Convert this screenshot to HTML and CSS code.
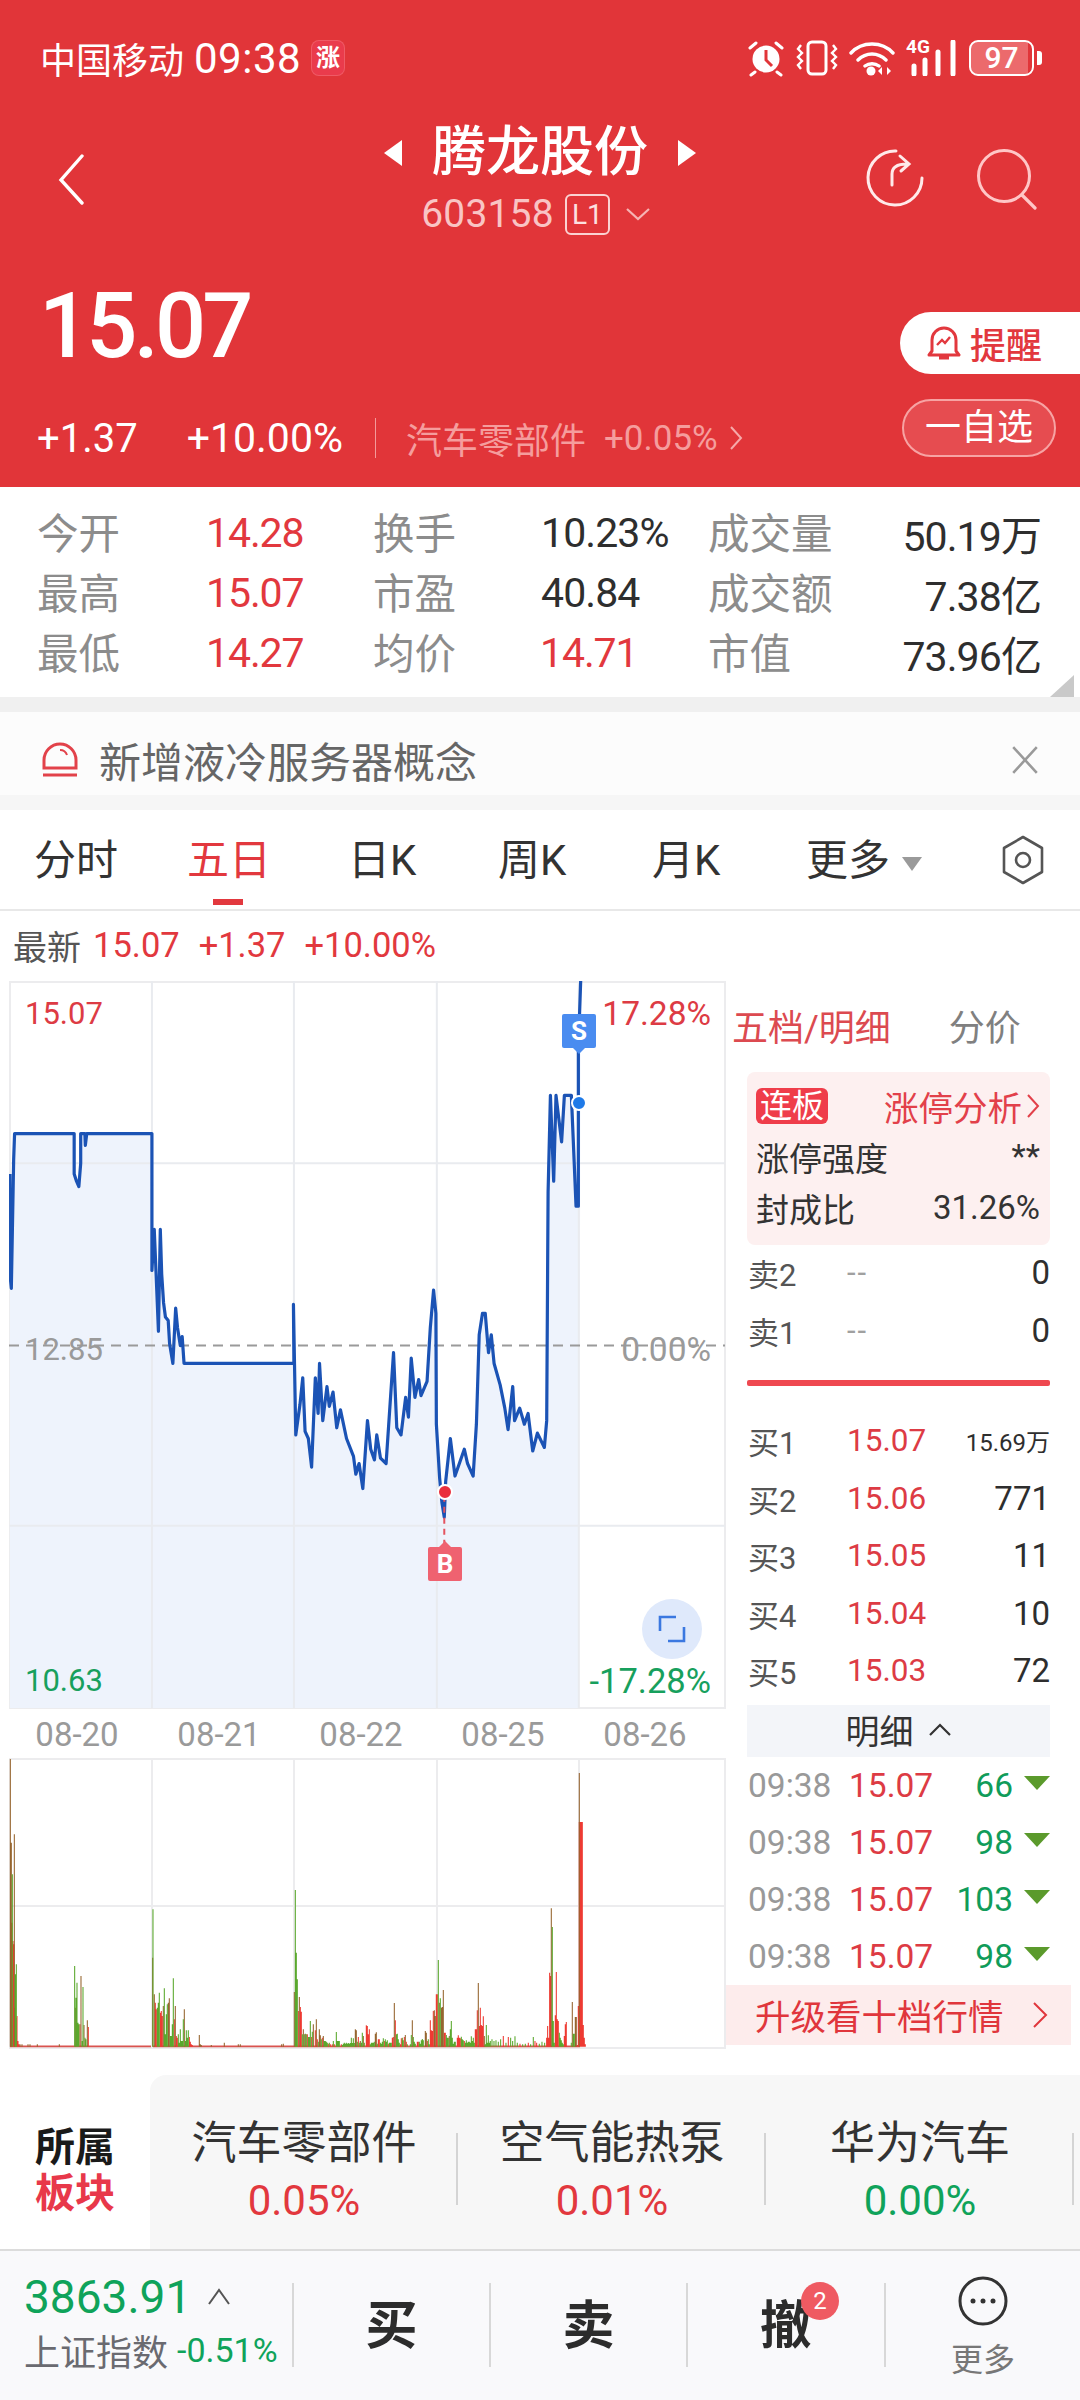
FILE: index.html
```html
<!DOCTYPE html>
<html lang="zh">
<head>
<meta charset="utf-8">
<title>腾龙股份</title>
<link rel="stylesheet" href="styles.css">
</head>
<body>
<div class="page">
  <header class="header">
    <div class="status">
      <span class="carrier">中国移动</span>
      <span class="clock">09:38</span>
      <span class="appicon">涨</span>
      <span class="status-right">
        <svg class="si" width="38" height="38" viewBox="0 0 38 38"><circle cx="19" cy="20" r="13.5" fill="#fff"/><path d="M19 11v10l6 6" fill="none" stroke="#e13539" stroke-width="3"/><path d="M3 9l6-5M35 9l-6-5M8 33l-4 3M30 33l4 3" stroke="#fff" stroke-width="3" stroke-linecap="round"/></svg>
        <svg class="si" width="42" height="36" viewBox="0 0 42 36"><rect x="12" y="2" width="18" height="32" rx="4" fill="none" stroke="#fff" stroke-width="3"/><path d="M5 5l-3 4 4 4-4 4 4 4-4 4 3 4M37 5l3 4-4 4 4 4-4 4 4 4-3 4" fill="none" stroke="#fff" stroke-width="2.4"/></svg>
        <svg class="si" width="46" height="36" viewBox="0 0 46 36"><path d="M2 13C13 1 33 1 44 13M9 20c8-8 20-8 28 0M16 26c4-3 10-3 14 0" fill="none" stroke="#fff" stroke-width="3.4" stroke-linecap="round"/><circle cx="22" cy="31" r="4.5" fill="#fff"/><path d="M33 27l-4 4 4 4zM38 27l4 4-4 4z" fill="#fff"/></svg>
        <span class="net"><b class="net-4g">4G</b><svg class="net-bars" width="50" height="36" viewBox="0 0 50 36"><path d="M6 26v8M17 20v14M30 12v22M45 2v32" stroke="#fff" stroke-width="5" stroke-linecap="round"/></svg></span>
        <span class="battery"><span class="battery-num">97</span></span>
        <span class="battery-nub"></span>
      </span>
    </div>
    <div class="nav">
      <div class="nav-left">
        <svg width="30" height="52" viewBox="0 0 30 52"><path d="M26 3L5 27l21 23" fill="none" stroke="#fff" stroke-width="3.4" stroke-linecap="round"/></svg>
      </div>
      <div class="nav-center">
        <div class="title-row">
          <i class="tri tri-l"></i>
          <span class="title">腾龙股份</span>
          <i class="tri tri-r"></i>
        </div>
        <div class="code-row">
          <span class="code">603158</span>
          <span class="l1">L1</span>
          <svg class="code-chev" width="26" height="14" viewBox="0 0 26 14"><path d="M2 2l11 10L24 2" fill="none" stroke="#f6b4b4" stroke-width="2.2"/></svg>
        </div>
      </div>
      <div class="nav-right">
        <svg width="60" height="60" viewBox="0 0 60 60"><path d="M31 3A27 27 0 1 0 57 30" fill="none" stroke="#ffeaea" stroke-width="3" stroke-linecap="round"/><path d="M27 37V26c0-7 5-10 15-10M35 8l9 8-8 7" fill="none" stroke="#ffeaea" stroke-width="3" stroke-linecap="round"/></svg>
        <svg width="64" height="62" viewBox="0 0 64 62"><circle cx="29" cy="28" r="25.5" fill="none" stroke="#ffc6c6" stroke-width="3"/><path d="M47 47l13 13" stroke="#ffc6c6" stroke-width="3.2" stroke-linecap="round"/></svg>
      </div>
    </div>
    <div class="quote">
      <div class="quote-left">
        <div class="price">15.07</div>
        <div class="delta-row">
          <span class="delta">+1.37</span>
          <span class="delta delta-pct">+10.00%</span>
          <i class="delta-sep"></i>
          <span class="sector">汽车零部件</span>
          <span class="sector-pct">+0.05%</span>
          <svg width="14" height="26" viewBox="0 0 14 26"><path d="M2 2l10 11L2 24" fill="none" stroke="#f6a9a9" stroke-width="2"/></svg>
        </div>
      </div>
      <div class="quote-right">
        <div class="pill-alert">
          <svg width="34" height="38" viewBox="0 0 34 38"><path d="M5 27V16a12 12 0 0 1 24 0v11l3 4H2zM12 34h10" fill="none" stroke="#e2383e" stroke-width="3" stroke-linejoin="round"/><path d="M10 21l5-5 3 3 5-6" fill="none" stroke="#e2383e" stroke-width="2.4"/></svg>
          <span>提醒</span>
        </div>
        <div class="pill-watch">一自选</div>
      </div>
    </div>
  </header>

  <section class="stats">
    <span class="lb">今开</span><span class="up">14.28</span><span class="lb">换手</span><span class="val">10.23%</span><span class="lb">成交量</span><span class="val ra">50.19万</span>
    <span class="lb">最高</span><span class="up">15.07</span><span class="lb">市盈</span><span class="val">40.84</span><span class="lb">成交额</span><span class="val ra">7.38亿</span>
    <span class="lb">最低</span><span class="up">14.27</span><span class="lb">均价</span><span class="up">14.71</span><span class="lb">市值</span><span class="val ra">73.96亿</span>
    <i class="stats-corner"></i>
  </section>
  <div class="band"></div>
  <section class="notice">
    <svg width="38" height="38" viewBox="0 0 38 38"><path d="M3 27V19a16 16 0 0 1 32 0v8zM2 34h34" fill="none" stroke="#e2424a" stroke-width="3"/><path d="M19 9c3 0 6 2 7 5" fill="none" stroke="#e2424a" stroke-width="2"/></svg>
    <span class="notice-text">新增液冷服务器概念</span>
    <svg class="notice-x" width="30" height="30" viewBox="0 0 28 28"><path d="M3 2l22 24M25 2L3 26" stroke="#9a9a9a" stroke-width="2.4"/></svg>
  </section>
  <div class="band-thin"></div>

  <nav class="tabs">
    <span class="tab tab-a">分时</span>
    <span class="tab tab-b tab-on">五日</span>
    <span class="tab tab-c">日K</span>
    <span class="tab tab-d">周K</span>
    <span class="tab tab-e">月K</span>
    <span class="tab tab-f">更多<i class="tab-tri"></i></span>
    <svg class="tab-set" width="44" height="50" viewBox="0 0 44 50"><path d="M22 2l19 11v24L22 48 3 37V13z" fill="none" stroke="#555" stroke-width="2.6" stroke-linejoin="round"/><circle cx="22" cy="25" r="7" fill="none" stroke="#555" stroke-width="2.6"/></svg>
  </nav>
  <div class="latest"><span class="latest-l">最新</span><span>15.07</span><span>+1.37</span><span>+10.00%</span></div>

  <section class="main">
    <div class="charts">
      <div class="chart">
        <svg class="chart-svg" width="716" height="727" viewBox="20 60 1538 2034" preserveAspectRatio="none">
          <path class="area" d="M22 600L22 880 25 920 30 560 32 487 160 487 160 600 165 620 170 635 174 570 174 487 183 487 184 520 187 487 327 487 327 870 332 755 336 880 341 1040 345 755 348 880 352 960 356 1000 362 1010 365 1075 372 1130 378 975 382 1030 388 1080 392 1055 396 1130 400 1130 632 1130 631 965 636 1330 645 1245 651 1170 656 1320 663 1340 670 1420 678 1170 684 1270 687 1130 694 1290 703 1195 708 1250 716 1210 724 1310 732 1260 745 1340 760 1390 765 1440 772 1410 780 1480 790 1290 797 1370 805 1400 810 1330 818 1395 830 1410 846 1100 853 1310 862 1330 872 1225 878 1280 884 1115 892 1225 900 1175 905 1220 918 1180 925 1030 932 925 937 990 938 1300 945 1450 950 1520 955 1560 958 1460 968 1340 978 1445 990 1400 998 1370 1005 1410 1017 1445 1024 1300 1030 1050 1037 990 1043 990 1050 1100 1056 1050 1062 1130 1075 1190 1085 1255 1092 1315 1102 1195 1106 1290 1117 1255 1127 1300 1135 1270 1145 1375 1155 1325 1170 1365 1175 1290 1178 650 1183 380 1190 620 1195 380 1207 510 1213 380 1228 380 1238 690 1243 690 1243 250 1248 60L1244 2094 22 2094Z"/>
          <path class="grid" d="M327 60V2094M632 60V2094M939 60V2094M1244 60V2094M20 570H1558M20 1584H1558"/>
          <path class="zero" d="M20 1080H1558"/>
          <path class="pline" d="M22 600L22 880 25 920 30 560 32 487 160 487 160 600 165 620 170 635 174 570 174 487 183 487 184 520 187 487 327 487 327 870 332 755 336 880 341 1040 345 755 348 880 352 960 356 1000 362 1010 365 1075 372 1130 378 975 382 1030 388 1080 392 1055 396 1130 400 1130 632 1130 631 965 636 1330 645 1245 651 1170 656 1320 663 1340 670 1420 678 1170 684 1270 687 1130 694 1290 703 1195 708 1250 716 1210 724 1310 732 1260 745 1340 760 1390 765 1440 772 1410 780 1480 790 1290 797 1370 805 1400 810 1330 818 1395 830 1410 846 1100 853 1310 862 1330 872 1225 878 1280 884 1115 892 1225 900 1175 905 1220 918 1180 925 1030 932 925 937 990 938 1300 945 1450 950 1520 955 1560 958 1460 968 1340 978 1445 990 1400 998 1370 1005 1410 1017 1445 1024 1300 1030 1050 1037 990 1043 990 1050 1100 1056 1050 1062 1130 1075 1190 1085 1255 1092 1315 1102 1195 1106 1290 1117 1255 1127 1300 1135 1270 1145 1375 1155 1325 1170 1365 1175 1290 1178 650 1183 380 1190 620 1195 380 1207 510 1213 380 1228 380 1238 690 1243 690 1243 250 1248 60"/>
          <path class="bdash" d="M955 1500V1650"/>
        </svg>
        <span class="cl cl-tl">15.07</span>
        <span class="cl cl-tr">17.28%</span>
        <span class="cl cl-ml">12.85</span>
        <span class="cl cl-mr">0.00%</span>
        <span class="cl cl-bl">10.63</span>
        <span class="cl cl-br">-17.28%</span>
        <i class="dot dot-red"></i>
        <i class="dot dot-blue"></i>
        <span class="mark mark-s">S</span>
        <span class="mark mark-b">B</span>
        <span class="expand">
          <svg width="30" height="30" viewBox="0 0 30 30"><path d="M3 17V3h16M27 13v14H11" fill="none" stroke="#3b78e0" stroke-width="2.6"/></svg>
        </span>
      </div>
      <div class="dates"><span>08-20</span><span>08-21</span><span>08-22</span><span>08-25</span><span>08-26</span></div>
      <div class="volume">
        <svg width="717" height="291" viewBox="9 1757 717 291">
          <path class="vgrid" d="M10 1758H725V2047H10ZM152 1757V2046M294 1757V2046M437 1757V2046M579 1757V2046M9 1905H725"/>
          <g transform="translate(0 1890) scale(.3333)">
            <path class="vbase" d="M30 466H453M459 466H880M880 466H1740"/>
            <path class="vr" d="M33 467V95M36 467V95M39 467V150M42 467V160M45 467V350M48 467V380M51 467V375M54 467V450M57 467V460M240 467V400M265 467V408M466 467V335M469 467V355M481 467V365M484 467V360M487 467V375M523 467V385M529 467V435M532 467V440M568 467V438M571 467V452M574 467V460M577 467V462"/>
            <path class="vo" d="M31 467V-396M34 467V-145M43 467V-170M60 467V460M66 467V460M84 467V460M90 467V460M112 467V460M178 467V460M226 467V350M243 467V255M252 467V402M262 467V388M458 467V200M463 467V310M490 467V345M505 467V335M508 467V322M526 467V345M553 467V355M598 467V432M601 467V460M604 467V462M634 467V462M673 467V455M715 467V460M721 467V460M845 467V460M850 467V458"/>
            <path class="vg" d="M37 467V-50M46 467V250M49 467V220M224 467V225M228 467V320M231 467V275M234 467V395M237 467V400M246 467V450M249 467V288M255 467V440M258 467V445M459 467V55M472 467V350M475 467V335M478 467V305M493 467V292M496 467V430M499 467V370M502 467V340M511 467V435M514 467V435M517 467V400M520 467V262M535 467V430M538 467V455M541 467V415M544 467V450M547 467V450M550 467V385M556 467V450M559 467V418M562 467V440M565 467V418"/>
          </g>
          <g transform="translate(290 1890) scale(.3333)">
            <path class="vr" d="M25 467V360M31 467V348M34 467V362M52 467V430M64 467V438M76 467V418M82 467V445M97 467V440M115 467V458M121 467V460M127 467V460M133 467V460M154 467V460M205 467V438M229 467V403M232 467V405M235 467V430M238 467V415M265 467V445M268 467V445M283 467V450M295 467V458M307 467V440M310 467V438M316 467V388M331 467V460M334 467V442M343 467V438M349 467V452M382 467V452M385 467V452M412 467V450M421 467V388M424 467V418M427 467V420M430 467V360M439 467V310M442 467V310M463 467V425M466 467V425M502 467V440M505 467V433M508 467V440M511 467V442M523 467V450M556 467V415M559 467V415M562 467V358M568 467V405M571 467V350M574 467V402M577 467V405M580 467V376M640 467V435M655 467V438M690 467V458M715 467V455M735 467V450M740 467V455M770 467V440M773 467V405M776 467V440M779 467V245M782 467V255M796 467V373M799 467V243M802 467V385M805 467V390M823 467V435M826 467V400M829 467V393M862 467V462M865 467V345M868 467V-207M871 467V-207M874 467V-207M877 467V-207M880 467V402M883 467V440M886 467V460"/>
            <path class="vo" d="M13 467V303M28 467V318M40 467V415M46 467V428M70 467V400M79 467V385M88 467V415M91 467V433M100 467V435M196 467V415M199 467V418M211 467V450M220 467V435M256 467V428M259 467V424M313 467V336M346 467V432M367 467V388M406 467V420M409 467V425M433 467V358M436 467V375M448 467V335M454 467V350M457 467V348M460 467V297M478 467V435M565 467V276M583 467V435M784 467 784 52M847 467V333M856 467V378M859 467V378M868 467V-354"/>
            <path class="vg" d="M16 467V-3M19 467V185M22 467V265M37 467V430M43 467V430M49 467V430M55 467V438M58 467V438M61 467V390M67 467V422M85 467V452M94 467V445M103 467V450M106 467V450M109 467V452M112 467V455M118 467V455M130 467V450M139 467V423M142 467V450M145 467V450M148 467V450M157 467V462M160 467V458M163 467V455M166 467V458M169 467V455M172 467V458M175 467V456M178 467V458M181 467V456M184 467V440M187 467V456M190 467V442M193 467V456M202 467V452M208 467V455M214 467V455M217 467V425M223 467V455M241 467V460M244 467V455M247 467V455M250 467V455M253 467V452M262 467V458M271 467V455M274 467V458M277 467V452M280 467V442M286 467V445M289 467V452M292 467V448M298 467V455M301 467V455M304 467V455M319 467V430M322 467V428M325 467V445M328 467V455M337 467V440M340 467V448M352 467V460M361 467V460M364 467V432M370 467V438M373 467V452M376 467V458M388 467V452M391 467V458M394 467V448M397 467V444M400 467V448M415 467V445M418 467V460M445 467V207M451 467V322M469 467V432M472 467V440M475 467V440M481 467V415M484 467V390M487 467V440M490 467V458M493 467V452M496 467V452M514 467V437M517 467V445M520 467V448M526 467V455M529 467V448M532 467V455M535 467V452M538 467V452M541 467V455M544 467V436M547 467V450M550 467V440M553 467V455M586 467V460M589 467V402M592 467V455M595 467V433M598 467V455M601 467V450M606 467V445M612 467V450M618 467V448M625 467V452M632 467V445M648 467V455M662 467V440M668 467V450M675 467V436M682 467V455M698 467V460M706 467V458M722 467V460M730 467V438M748 467V458M756 467V452M764 467V455M787 467V108M790 467V390M793 467V455M808 467V425M811 467V440M814 467V448M817 467V455M820 467V460M844 467V455M850 467V428M853 467V428"/>
          </g>
        </svg>
      </div>
    </div>

    <aside class="panel">
      <div class="ptabs"><span class="ptab-on">五档/明细</span><span class="ptab">分价</span></div>
      <div class="limit">
        <div class="limit-row limit-head"><span class="limit-tag">连板</span><span class="limit-link">涨停分析<svg width="14" height="26" viewBox="0 0 14 26"><path d="M2 2l10 11L2 24" fill="none" stroke="#e2404a" stroke-width="2"/></svg></span></div>
        <div class="limit-row"><span>涨停强度</span><span>**</span></div>
        <div class="limit-row"><span>封成比</span><span>31.26%</span></div>
      </div>
      <div class="ob-row"><span class="ob-l">卖2</span><span class="ob-none">--</span><span class="ob-v">0</span></div>
      <div class="ob-row"><span class="ob-l">卖1</span><span class="ob-none">--</span><span class="ob-v">0</span></div>
      <div class="ob-bar"></div>
      <div class="ob-row"><span class="ob-l">买1</span><span class="ob-p">15.07</span><span class="ob-v ob-small">15.69万</span></div>
      <div class="ob-row"><span class="ob-l">买2</span><span class="ob-p">15.06</span><span class="ob-v">771</span></div>
      <div class="ob-row"><span class="ob-l">买3</span><span class="ob-p">15.05</span><span class="ob-v">11</span></div>
      <div class="ob-row"><span class="ob-l">买4</span><span class="ob-p">15.04</span><span class="ob-v">10</span></div>
      <div class="ob-row"><span class="ob-l">买5</span><span class="ob-p">15.03</span><span class="ob-v">72</span></div>
      <div class="detail-head">明细<svg width="24" height="14" viewBox="0 0 24 14"><path d="M2 12L12 2l10 10" fill="none" stroke="#333" stroke-width="2.2"/></svg></div>
      <div class="tr-row"><span class="tr-t">09:38</span><span class="tr-p">15.07</span><span class="tr-v">66</span><i class="tr-tri"></i></div>
      <div class="tr-row"><span class="tr-t">09:38</span><span class="tr-p">15.07</span><span class="tr-v">98</span><i class="tr-tri"></i></div>
      <div class="tr-row"><span class="tr-t">09:38</span><span class="tr-p">15.07</span><span class="tr-v">103</span><i class="tr-tri"></i></div>
      <div class="tr-row"><span class="tr-t">09:38</span><span class="tr-p">15.07</span><span class="tr-v">98</span><i class="tr-tri"></i></div>
      <div class="upgrade"><span>升级看十档行情</span><svg width="16" height="28" viewBox="0 0 16 28"><path d="M2 2l12 12L2 26" fill="none" stroke="#e0363c" stroke-width="2"/></svg></div>
    </aside>
  </section>

  <section class="sectors">
    <div class="sec-head"><span class="sec-a">所属</span><span class="sec-b">板块</span></div>
    <div class="sec-list">
      <div class="sec-item"><span class="sec-name">汽车零部件</span><span class="sec-pct up-c">0.05%</span></div>
      <div class="sec-item"><span class="sec-name">空气能热泵</span><span class="sec-pct up-c">0.01%</span></div>
      <div class="sec-item"><span class="sec-name">华为汽车</span><span class="sec-pct dn-c">0.00%</span></div>
    </div>
  </section>

  <footer class="footer">
    <div class="idx">
      <div class="idx-top"><span class="idx-num">3863.91</span><svg width="24" height="18" viewBox="0 0 24 18"><path d="M2 16L12 2l10 14" fill="none" stroke="#555" stroke-width="2"/></svg></div>
      <div class="idx-bot"><span class="idx-name">上证指数</span><span class="idx-pct">-0.51%</span></div>
    </div>
    <div class="act">买</div>
    <div class="act">卖</div>
    <div class="act act-badge">撤<span class="badge">2</span></div>
    <div class="more">
      <svg width="50" height="50" viewBox="0 0 50 50"><circle cx="25" cy="25" r="23" fill="none" stroke="#333" stroke-width="3"/><circle cx="15" cy="25" r="2.5" fill="#333"/><circle cx="25" cy="25" r="2.5" fill="#333"/><circle cx="35" cy="25" r="2.5" fill="#333"/></svg>
      <span>更多</span>
    </div>
  </footer>
</div>
</body>
</html>
```

FILE: styles.css
```css
* { box-sizing: border-box; }
html, body { margin: 0; padding: 0; background: #fff; }
body { font-family: Roboto, "Noto Sans CJK SC", sans-serif; color: #333; }
i { display: block; font-style: normal; }
.page { width: 1080px; height: 2400px; overflow: hidden; display: flex; flex-direction: column; }

/* header */
.header { height: 487px; background: #e13539; color: #fff; flex: none; }
.status { height: 116px; display: flex; align-items: center; padding: 0 38px 0 40px; }
.carrier { font-size: 36px; }
.clock { font-size: 42px; margin-left: 10px; letter-spacing: .5px; }
.appicon { width: 32px; height: 34px; margin-left: 11px; border-radius: 7px; background: #ea3b4c; font-size: 24px; line-height: 34px; text-align: center; font-weight: 700; box-shadow: 0 0 0 1px #ef5a66; }
.status-right { margin-left: auto; display: flex; align-items: center; }
.si { margin-right: 11px; flex: none; }
.net { position: relative; width: 52px; height: 36px; margin-right: 11px; }
.net-4g { position: absolute; left: 0; top: -4px; font-size: 19px; line-height: 22px; font-weight: 700; }
.net-bars { position: absolute; left: 2px; top: 0; }
.battery { width: 65px; height: 36px; border: 2.5px solid #fff; border-radius: 9px; display: flex; align-items: center; justify-content: center; background: linear-gradient(90deg, #ec6a6c 94%, #e13539 94%); }
.battery-num { font-size: 30px; font-weight: 500; line-height: 30px; }
.battery-nub { width: 5px; height: 14px; margin-left: 3px; background: #fff; border-radius: 0 3px 3px 0; }

.nav { height: 124px; display: grid; grid-template-columns: 1fr auto 1fr; }
.nav-left { padding: 37px 0 0 56px; }
.nav-center { display: flex; flex-direction: column; align-items: center; }
.nav-right { display: flex; justify-content: flex-end; gap: 50px; padding: 32px 41px 0 0; align-items: flex-start; }
.title-row { display: flex; align-items: center; gap: 30px; height: 72px; padding-top: 2px; }
.title { font-size: 54px; line-height: 72px; font-weight: 500; }
.tri { width: 0; height: 0; border-style: solid; border-width: 13px 0; }
.tri-l { border-color: transparent #fff transparent transparent; border-right-width: 18px; border-left-width: 0; }
.tri-r { border-color: transparent transparent transparent #fff; border-left-width: 18px; border-right-width: 0; }
.code-row { display: flex; align-items: center; height: 46px; color: #f9c4c4; gap: 11px; margin: 3px 0 0 -8px; }
.code { font-size: 39px; letter-spacing: .2px; }
.code-chev { margin-left: 4px; }
.l1 { width: 45px; height: 41px; border: 2px solid #fbd2d2; border-radius: 6px; font-size: 28px; line-height: 37px; text-align: center; color: #fde0e0; }

.quote { display: flex; justify-content: space-between; }
.quote-left { padding-left: 37px; }
.price { font-size: 90px; line-height: 90px; height: 90px; margin-top: 42px; margin-left: 2px; letter-spacing: -3.8px; font-weight: 500; }
.delta-row { display: flex; align-items: center; height: 50px; margin-top: 41px; }
.delta { font-size: 40px; }
.delta-pct { margin-left: 49px; font-size: 41px; }
.delta-sep { width: 1px; height: 40px; background: #f39a9a; margin: 0 30px 0 32px; }
.sector { font-size: 36px; color: #f59d9d; }
.sector-pct { font-size: 35px; color: #f59d9d; margin: 0 11px 0 18px; }
.quote-right { display: flex; flex-direction: column; align-items: flex-end; padding-top: 72px; gap: 25px; }
.pill-alert { width: 180px; height: 62px; background: #fff; border-radius: 31px 0 0 31px; display: flex; align-items: center; padding-left: 27px; gap: 9px; font-size: 36px; color: #e2383e; font-weight: 500; }
.pill-watch { width: 154px; height: 58px; margin-right: 24px; border: 2px solid #f7a3a3; border-radius: 29px; background: #e64c50; font-size: 36px; line-height: 55px; text-align: center; }

/* stats */
.stats { position: relative; flex: none; height: 210px; padding: 16px 0 0 37px; display: grid; grid-template-columns: 170px 166px 168px 167px 150px 183px; grid-auto-rows: 60px; align-items: center; font-size: 41px; }
.lb { font-size: 41.5px; color: #8c8c8c; padding-bottom: 5px; white-space: nowrap; }
.up { color: #e2383e; letter-spacing: -1.1px; margin-left: -1px; }
.val { color: #2e2e2e; letter-spacing: -.9px; }
.ra { text-align: right; white-space: nowrap; }
.stats-corner { position: absolute; right: 6px; bottom: 0; border-style: solid; border-width: 0 0 22px 24px; border-color: transparent transparent #c9c9c9 transparent; }
.band { flex: none; height: 15px; background: #f0f0f0; }
.notice { flex: none; height: 83px; background: #fcfcfc; display: flex; align-items: center; padding: 12px 40px 0 41px; }
.notice-text { font-size: 42px; color: #666; margin-left: 20px; }
.notice-x { margin-left: auto; }
.band-thin { flex: none; height: 15px; background: #f6f6f6; }

/* tabs */
.tabs { position: relative; flex: none; height: 101px; border-bottom: 2px solid #e8e8e8; display: flex; align-items: center; padding: 3px 0 0 34px; font-size: 42px; color: #333; }
.tab { display: flex; align-items: center; flex: none; position: relative; line-height: 50px; }
.tab-a { width: 153px; }
.tab-b { width: 163px; color: #e2383e; }
.tab-c { width: 150px; margin-left: -2px; }
.tab-d { width: 154px; }
.tab-e { width: 154px; }
.tab-on::after { content: ""; position: absolute; left: 26px; top: 63px; width: 30px; height: 6px; background: #e2383e; }
.tab-tri { margin: 6px 0 0 12px; border-style: solid; border-width: 14px 10px 0; border-color: #9a9a9a transparent transparent; }
.tab-set { position: absolute; right: 35px; top: 25px; }
.latest { flex: none; height: 70px; display: flex; align-items: center; padding: 0 0 2px 13px; gap: 19px; font-size: 34.5px; color: #e2383e; }
.latest-l { color: #555; font-size: 34px; margin-right: -7px; }

/* main */
.main { flex: none; height: 1067px; display: flex; }
.charts { width: 726px; padding-left: 9px; flex: none; }
.chart { position: relative; width: 717px; height: 728px; border: 2px solid #ececee; }
.chart-svg { position: absolute; left: -2px; top: -2px; }
.area { fill: #eef3fc; }
.grid { fill: none; stroke: #e9ebef; stroke-width: 2; vector-effect: non-scaling-stroke; }
.zero { fill: none; stroke: #9a9a9a; stroke-width: 2; stroke-dasharray: 10 7; vector-effect: non-scaling-stroke; }
.pline { fill: none; stroke: #1b53b5; stroke-width: 3.2; stroke-linejoin: round; vector-effect: non-scaling-stroke; }
.bdash { fill: none; stroke: #e4535f; stroke-width: 2; stroke-dasharray: 6 5; vector-effect: non-scaling-stroke; }
.cl { position: absolute; font-size: 31px; line-height: 36px; }
.cl-tl { left: 14px; top: 13px; color: #dd3b44; }
.cl-tr { right: 13px; top: 13px; color: #dd3b44; font-size: 33.5px; }
.cl-ml { left: 14px; top: 349px; color: #9a9a9a; }
.cl-mr { right: 13px; top: 349px; color: #9a9a9a; font-size: 33.5px; }
.cl-bl { left: 14px; top: 680px; color: #17a05d; }
.cl-br { right: 13px; top: 680px; color: #17a05d; font-size: 34.5px; }
.dot { position: absolute; width: 16px; height: 16px; border-radius: 50%; border: 2px solid #fff; }
.dot-red { left: 426px; top: 501px; background: #ea2f3d; }
.dot-blue { left: 560px; top: 112px; background: #1f7ae8; }
.mark { position: absolute; width: 34px; height: 34px; border-radius: 2px; color: #fff; font-size: 26px; font-weight: 700; line-height: 34px; text-align: center; }
.mark::after { content: ""; position: absolute; left: 11px; border-style: solid; }
.mark-s { left: 551px; top: 31px; background: #4a8cf0; }
.mark-s::after { top: 34px; border-width: 6px 6px 0; border-color: #4a8cf0 transparent transparent; }
.mark-b { left: 417px; top: 564px; background: #ef6270; }
.mark-b::after { top: -6px; border-width: 0 6px 6px; border-color: transparent transparent #ef6270; }
.expand { position: absolute; left: 631px; top: 616px; width: 60px; height: 60px; border-radius: 50%; background: #dfe9fb; display: flex; align-items: center; justify-content: center; }
.dates { height: 49px; display: flex; align-items: center; margin-left: -3px; font-size: 33px; color: #9a9a9a; padding-top: 2px; }
.dates span { width: 142px; text-align: center; }
.volume { height: 290px; }
.volume svg { display: block; }
.vgrid { fill: none; stroke: #ececee; stroke-width: 2; }
.vbase { fill: none; stroke: #d9534f; stroke-width: 5; }
.vr, .vo, .vg { fill: none; stroke-width: 3.2; }
.vr { stroke: #ee3a32; }
.vo { stroke: #96652f; }
.vg { stroke: #5aa82d; }

/* right panel */
.panel { flex: none; width: 354px; display: flex; flex-direction: column; padding: 0 30px 0 21px; }
.ptabs { flex: none; height: 91px; display: flex; align-items: center; font-size: 36px; margin-left: -15px; padding-bottom: 4px; }
.ptab-on { color: #dc4a50; }
.ptab { color: #808080; margin-left: 58px; }
.limit { flex: none; height: 173px; background: #fdf0f0; border-radius: 8px; padding: 9px 10px 0 9px; }
.limit-row { display: flex; justify-content: space-between; align-items: center; height: 51px; font-size: 33px; color: #333; }
.limit-head { height: 50px; }
.limit-tag { width: 72px; height: 36px; background: #ef3d4a; color: #fff; border-radius: 6px; font-size: 32px; line-height: 36px; text-align: center; }
.limit-link { display: flex; align-items: center; gap: 4px; font-size: 34.5px; color: #e2404a; }
.ob-row { flex: none; height: 57.5px; display: flex; align-items: center; font-size: 31px; padding: 0 0 2px 1px; }
.ob-l { width: 99px; color: #555; }
.ob-none { color: #a0a0a0; letter-spacing: 2px; }
.ob-p { font-size: 31.5px; color: #dd3b44; }
.ob-v { margin-left: auto; font-size: 33px; color: #2e2e2e; }
.ob-small { font-size: 24px; }
.ob-bar { flex: none; height: 6px; margin: 20px 0 27px; background: #ef4850; border-radius: 2px; }
.detail-head { flex: none; height: 52px; margin-top: 4px; background: #f3f5f9; display: flex; align-items: center; justify-content: center; gap: 14px; font-size: 34px; color: #333; padding-bottom: 2px; }
.tr-row { flex: none; height: 57px; display: flex; align-items: center; font-size: 33.5px; padding-left: 1px; }
.tr-t { width: 101px; color: #999; }
.tr-p { color: #dd3b44; }
.tr-v { margin-left: auto; color: #109c5a; }
.tr-tri { margin: -4px 0 0 11px; border-style: solid; border-width: 14px 13px 0; border-color: #5b9a2c transparent transparent; }
.upgrade { flex: none; height: 60px; margin: 0 -21px 0 -21px; background: #fdecec; display: flex; align-items: center; justify-content: space-between; padding: 0 23px 0 29px; font-size: 35.5px; color: #e0363c; width: 345px; }

/* sectors */
.sectors { flex: none; height: 201px; display: flex; align-items: flex-end; }
.sec-head { width: 150px; height: 174px; flex: none; display: flex; flex-direction: column; align-items: flex-start; padding: 50px 0 0 35px; font-size: 40px; font-weight: 700; line-height: 46px; }
.sec-a { color: #1a1a1a; }
.sec-b { color: #e8384a; }
.sec-list { flex: 1; height: 174px; background: #f7f7f7; border-top-left-radius: 16px; display: flex; padding-top: 42px; }
.sec-item { width: 308px; height: 100px; display: flex; flex-direction: column; align-items: center; position: relative; }
.sec-item::after { content: ""; position: absolute; right: 0; top: 16px; width: 2px; height: 72px; background: #d4d4d4; }
.sec-name { font-size: 45px; line-height: 52px; color: #333; margin-top: 1px; }
.sec-pct { font-size: 42px; line-height: 50px; margin-top: 6px; }
.up-c { color: #e2383e; }
.dn-c { color: #0fa35a; }

/* footer */
.footer { flex: 1; border-top: 2px solid #dcdcdc; background: #f9f9fb; display: flex; padding-top: 32px; align-items: flex-start; }
.idx { width: 294px; height: 84px; padding-left: 24px; border-right: 2px solid #d8d8d8; flex: none; }
.idx-top { display: flex; align-items: center; height: 42px; gap: 16px; margin-top: -7px; }
.idx-num { font-size: 46px; color: #0fa35a; }
.idx-bot { display: flex; align-items: center; height: 44px; margin-top: 10px; white-space: nowrap; }
.idx-name { font-size: 36px; color: #6a6a70; }
.idx-pct { font-size: 34px; color: #0fa35a; margin-left: 9px; }
.act { position: relative; width: 197px; height: 84px; flex: none; border-right: 2px solid #d8d8d8; text-align: center; font-size: 52px; line-height: 88px; font-weight: 700; color: #2c2c2c; }
.act-badge { width: 198px; }
.badge { position: absolute; left: 113px; top: -1px; width: 38px; height: 38px; border-radius: 50%; background: #ef5a62; color: #fff; font-size: 24px; line-height: 38px; font-weight: 400; text-align: center; }
.more { flex: 1; display: flex; flex-direction: column; align-items: center; margin-top: -7px; font-size: 32px; color: #777; }
.more svg { display: block; }
.more span { margin-top: 12px; line-height: 44px; }
```
